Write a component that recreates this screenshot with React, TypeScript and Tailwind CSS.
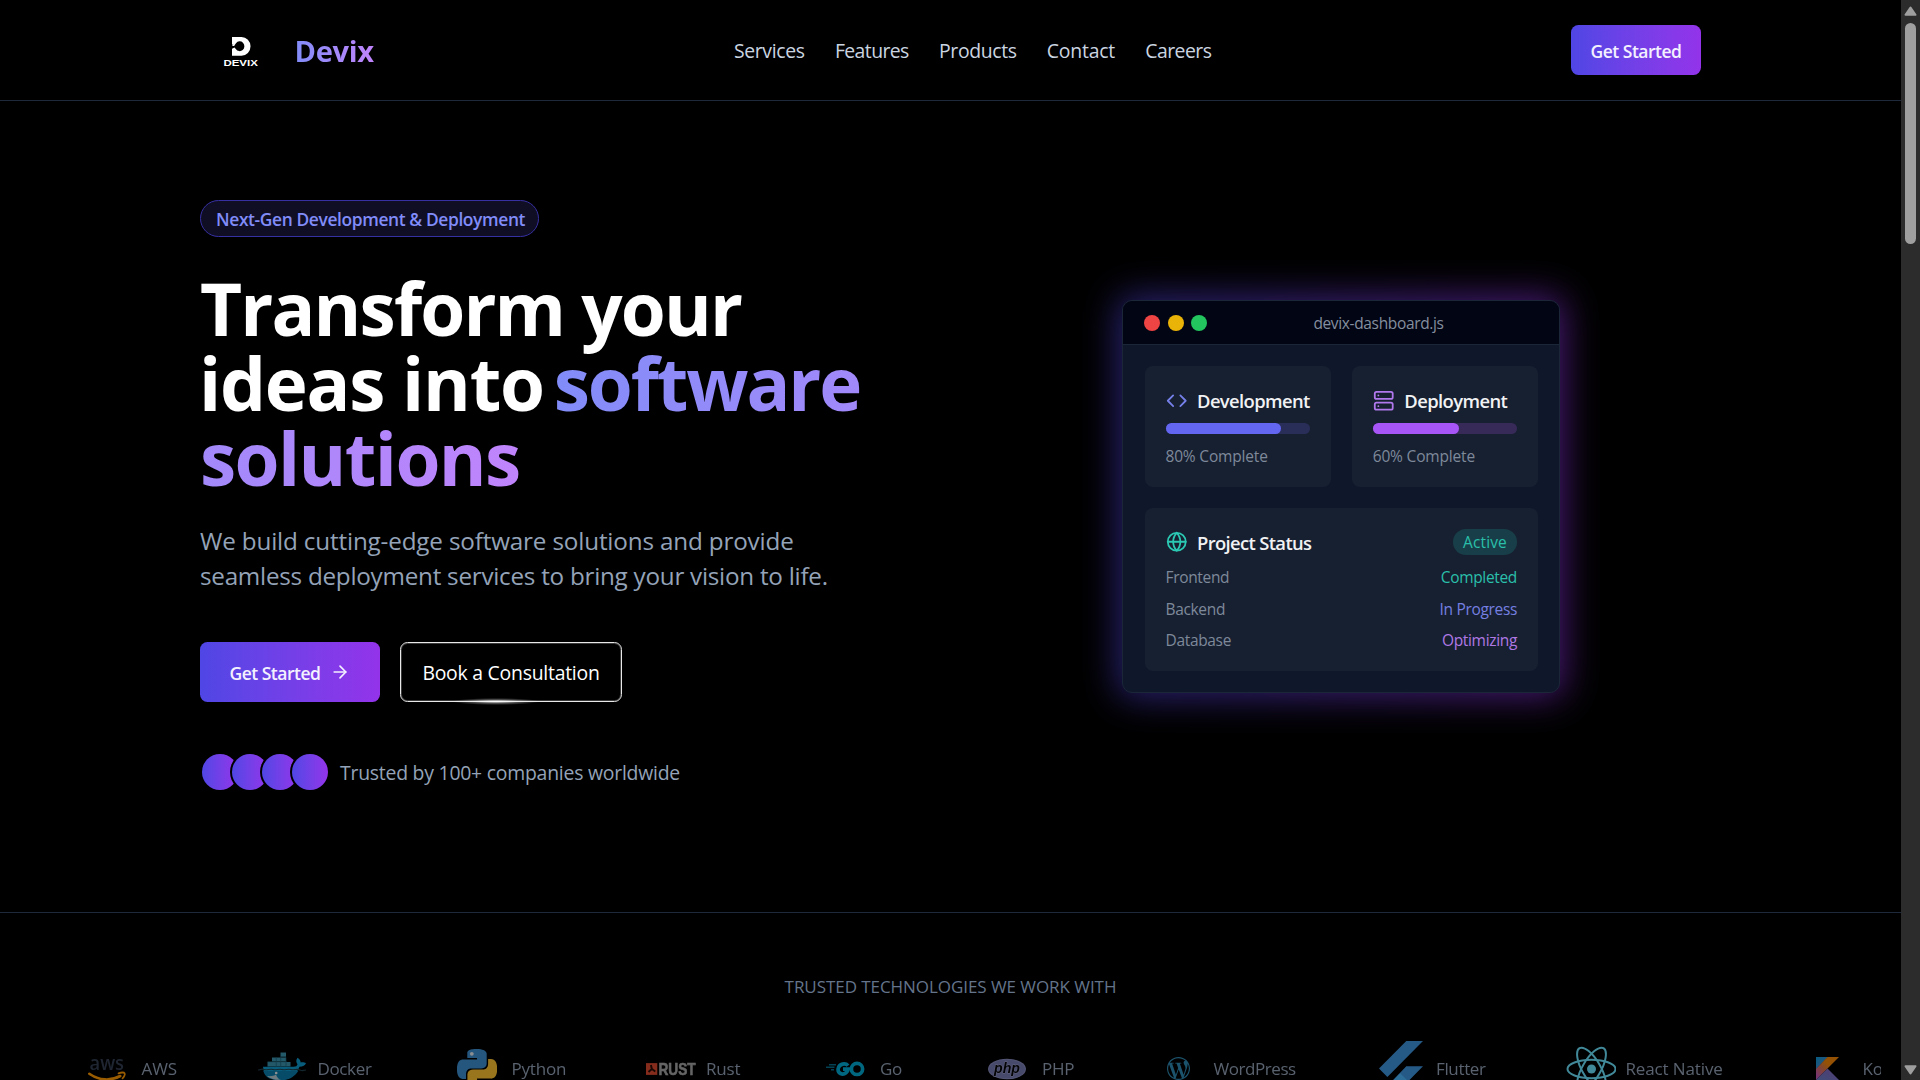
import React from 'react';
import { ArrowRight, Code, Globe, Server } from 'lucide-react';
import { SiWordpress } from 'react-icons/si';

const navItems = [
  { label: 'Services', tracking: 'tracking-[-0.36px]' },
  { label: 'Features', tracking: 'tracking-[-0.58px]' },
  { label: 'Products', tracking: 'tracking-[-0.37px]' },
  { label: 'Contact', tracking: 'tracking-[-0.21px]' },
  { label: 'Careers', tracking: 'tracking-[-0.55px]' },
];

function DevixMark() {
  return (
    <svg width="36" height="32" viewBox="0 0 36 32" fill="#fff">
      <path
        fillRule="evenodd"
        d="M9 1h9.500a9 9.300 0 0 1 0 18.700H9v-7l2.500-1.200 1.300 1.500a4.700 4.900 0 1 0 .2-5.800l-1.500 2L9 8.500z"
      />
      <rect x="9.400" y="9" width="2" height="1" />
      <text
        x="0.400"
        y="29.600"
        fontFamily="Liberation Sans, sans-serif"
        fontWeight="700"
        fontSize="8.400"
        textLength="34.500"
        lengthAdjust="spacingAndGlyphs"
      >
        DEVIX
      </text>
    </svg>
  );
}

function Header() {
  return (
    <header className="h-[101px] border-b border-[#1e293b]">
      <div className="ml-[200px] flex h-[100px] w-[1501px] items-center justify-between">
        <div className="flex w-[300px] items-center pl-[22.5px]">
          <div className="mt-[3px]">
            <DevixMark />
          </div>
          <span className="ml-[36px] bg-gradient-to-r from-[#818cf8] to-[#c084fc] bg-clip-text pt-px text-[29.1px] leading-[40px] font-bold tracking-[-0.35px] text-transparent">
            Devix
          </span>
        </div>
        <nav className="ml-[10px] flex flex-1 gap-[30.3px] pt-px pl-[224px] text-[19.4px] leading-[28px] text-[#cbd5e1]">
          {navItems.map((item) => (
            <a key={item.label} className={item.tracking}>
              {item.label}
            </a>
          ))}
        </nav>
        <button className="flex h-[50px] w-[130px] items-center justify-center rounded-[7.5px] bg-gradient-to-r from-[#4f46e5] to-[#9333ea] pt-[2px] text-[17.5px] font-semibold tracking-[-0.5px] whitespace-nowrap text-[#f3f0ff]">
          Get Started
        </button>
      </div>
    </header>
  );
}

function HeroCopy() {
  return (
    <div className="w-[720px]">
      <div className="flex h-[37px] w-[339px] items-center rounded-full border border-[#3730a3] bg-[#0f0e25] pt-[2px] pl-[15px] text-[17.4px] font-semibold tracking-[-0.38px] whitespace-nowrap text-[#818cf8]">
        Next-Gen Development &amp; Deployment
      </div>
      <h1 className="mt-[32.5px] text-[72.75px] leading-[75px] font-bold whitespace-nowrap text-white">
        <span className="tracking-[-1.84px]">Transform your</span>
        <br />
        <span className="-ml-px tracking-[-1.2px]">ideas into</span>{' '}
        <span className="-ml-[9px] bg-gradient-to-r from-[#818cf8] to-[#c084fc] bg-clip-text text-transparent">
          <span className="tracking-[-2.1px]">software</span>
          <br />
          <span className="tracking-[-1.6px]">solutions</span>
        </span>
      </h1>
      <p className="mt-[28px] text-[24.25px] leading-[35px] whitespace-nowrap text-[#94a3b8]">
        <span className="tracking-[-0.17px]">We build cutting-edge software solutions and provide</span>
        <br />
        <span className="tracking-[-0.26px]">seamless deployment services to bring your vision to life.</span>
      </p>
      <div className="mt-[49.5px] flex gap-5">
        <button className="flex h-[60px] w-[180px] items-center rounded-[7.5px] bg-gradient-to-r from-[#4f46e5] to-[#9333ea] pl-[29.5px] text-[17.5px] font-semibold tracking-[-0.5px] whitespace-nowrap text-[#f3f0ff]">
          <span className="pt-[2px]">Get Started</span>
          <ArrowRight className="ml-[10px]" size={20} strokeWidth={2} />
        </button>
        <button className="relative flex h-[60px] w-[222px] items-center justify-center rounded-[7.5px] border border-[#e8e8e8] text-[19.4px] tracking-[-0.24px] whitespace-nowrap text-white shadow-[inset_0_0_0_1px_#3a3a3a]">
          <span className="pt-[2px]">Book a Consultation</span>
          <span className="absolute bottom-[-4px] left-[51px] h-[7px] w-[88px] bg-[radial-gradient(closest-side,rgba(255,255,255,0.9),rgba(255,255,255,0.3)_55%,transparent)]" />
        </button>
      </div>
      <div className="mt-[50px] flex items-center">
        <div className="flex -space-x-[10px]">
          {[0, 1, 2, 3].map((n) => (
            <div key={n} className="size-10 rounded-full bg-black p-[2px]">
              <div className="size-9 rounded-full bg-gradient-to-r from-[#4f46e5] to-[#9333ea]" />
            </div>
          ))}
        </div>
        <span className="ml-[10px] pt-px text-[19.4px] leading-[28px] tracking-[-0.23px] whitespace-nowrap text-[#94a3b8]">
          Trusted by 100+ companies worldwide
        </span>
      </div>
    </div>
  );
}

const statusRows = [
  { label: 'Frontend', value: 'Completed', color: 'text-[#2abfaa]' },
  { label: 'Backend', value: 'In Progress', color: 'text-[#757fe0]' },
  { label: 'Database', value: 'Optimizing', color: 'text-[#b078e5]' },
];

function DashboardCard() {
  return (
    <div className="relative h-[393px] w-[438px]">
      <div className="absolute -inset-[4px] rounded-[12px] bg-gradient-to-r from-[#4f46e5] to-[#9333ea] opacity-50 blur-[18px]" />
      <div className="relative flex h-[393px] w-[438px] flex-col overflow-hidden rounded-[10px] border border-[#1b2638] bg-[#0f172a]">
        <div className="flex h-[44px] shrink-0 items-center border-b border-[#1b2638] bg-[#020514] pl-[21px]">
          <div className="flex gap-[7.7px]">
            <div className="size-[16px] rounded-full bg-[#ef4444]" />
            <div className="size-[16px] rounded-full bg-[#eab308]" />
            <div className="size-[16px] rounded-full bg-[#22c55e]" />
          </div>
          <span className="ml-[106px] pt-[2px] text-[15.5px] tracking-[-0.35px] text-[#848f9f]">devix-dashboard.js</span>
        </div>
        <div className="flex flex-col gap-[21px] py-[21px] pr-[21px] pl-[21.5px]">
          <div className="grid grid-cols-2 gap-[21px]">
            <div className="h-[121px] rounded-[8px] bg-[#172031] p-[21px]">
              <div className="flex h-[28px] items-center gap-[10px]">
                <Code className="shrink-0 text-[#757fe8]" size={21.5} strokeWidth={2} />
                <span className="text-[18.4px] font-semibold tracking-[-0.6px] text-[#f1f2f4]">Development</span>
              </div>
              <div className="mt-[8px] h-[11px] w-full rounded-full bg-[#282e58]">
                <div className="h-[11px] w-4/5 rounded-full bg-[#6366f1]" />
              </div>
              <div className="mt-[12px] text-[15.5px] leading-[21px] tracking-[-0.18px] text-[#7e899a]">80% Complete</div>
            </div>
            <div className="h-[121px] rounded-[8px] bg-[#172031] p-[21px]">
              <div className="flex h-[28px] items-center gap-[10px]">
                <Server className="shrink-0 text-[#b078ec]" size={21.5} strokeWidth={2} />
                <span className="text-[18.4px] font-semibold tracking-[-0.59px] text-[#f1f2f4]">Deployment</span>
              </div>
              <div className="mt-[8px] h-[11px] w-full rounded-full bg-[#372a59]">
                <div className="h-[11px] w-3/5 rounded-full bg-[#a855f7]" />
              </div>
              <div className="mt-[12px] text-[15.5px] leading-[21px] tracking-[-0.18px] text-[#7e899a]">60% Complete</div>
            </div>
          </div>
          <div className="h-[163px] rounded-[8px] bg-[#172031] p-[21px]">
            <div className="flex h-[26px] items-center justify-between">
              <div className="flex items-center gap-[10px]">
                <Globe className="shrink-0 text-[#2bc9b3]" size={21.5} strokeWidth={2} />
                <span className="pt-px text-[18.4px] font-semibold tracking-[-0.64px] text-[#f1f2f4]">Project Status</span>
              </div>
              <span className="flex h-[26px] w-[64px] items-center justify-center rounded-full bg-[#183f49] pt-[2px] text-[15.5px] tracking-[0.11px] text-[#2abfaa]">
                Active
              </span>
            </div>
            <div className="mt-[12px] flex flex-col gap-[10.6px] text-[15.5px] leading-[21px] tracking-[-0.33px]">
              {statusRows.map((row) => (
                <div key={row.label} className="flex justify-between">
                  <span className="text-[#7e899a]">{row.label}</span>
                  <span className={row.color}>{row.value}</span>
                </div>
              ))}
            </div>
          </div>
        </div>
      </div>
    </div>
  );
}

function AwsLogo() {
  return (
    <svg width="50" height="50" viewBox="0 0 50 50">
      <text x="7.500" y="25.500" fontFamily="Open Sans, sans-serif" fontWeight="600" fontSize="19" textLength="34.500" lengthAdjust="spacingAndGlyphs" fill="#343f52">
        aws
      </text>
      <path d="M7.300 29.800c10 7.200 22 7 31 2.200" fill="none" stroke="#ff9900" strokeWidth="2.600" strokeLinecap="round" />
      <path d="M36.500 29.400c3-1.200 5.700-.9 6.200 0s-.5 3.500-2.200 5" fill="none" stroke="#ff9900" strokeWidth="1.700" strokeLinecap="round" />
    </svg>
  );
}

function DockerLogo() {
  return (
    <svg width="50" height="50" viewBox="0 0 50 50">
      <g fill="#3b94b0">
        <path d="M22.500 8.500h5.500v4.300h-5.500zM14 13.500h14v4h-14zM9.500 18h23v4.600h-23z" />
      </g>
      <path d="M22.500 12.900H28M18.200 13.500v9M22.700 13.500v9M28 13.500v9M9.500 17.700h19" stroke="#1d6276" strokeWidth=".7" />
      <path
        d="M5 22.800h30.500c2.500 0 3.500-.8 4-2.500-1.500-2-1.700-4.300 0-6.500 2 1.200 3 2.600 3.200 4.600 2-.3 4-.1 5.300.9-1 2.300-3 3.400-6.500 3.400C38 31 32 36 21.500 36 12 36 5.500 32 5 22.800z"
        fill="#0f9bcf"
      />
      <path d="M5.300 27h35c-5 7-10 9.300-18.500 9.300C13 36.300 7 33.500 5.300 27z" fill="#0b7fae" />
      <path d="M9 32c4 .5 7-.2 9-1.500 1 3.300 2.500 4.600 5 5.300-5 .3-10-.5-14-3.800z" fill="#b7cdd6" />
      <circle cx="18.200" cy="29" r="1.300" fill="#e8f1f4" />
      <path d="M0 26c3 0 3-1.500 6-.5s6-1 9 0 6-1 9 0 6-1 9 0 6-1 9 .5 3 0 6 0" fill="none" stroke="#20404b" strokeWidth="1.200" />
    </svg>
  );
}

function PythonLogo() {
  return (
    <svg width="40" height="40" viewBox="0 0 24 24">
      <path
        fill="#3f8fd0"
        d="M14.25.18l.9.2.73.26.59.3.45.32.34.34.25.34.16.33.1.3.04.26.02.2-.01.13V8.5l-.05.63-.13.55-.21.46-.26.38-.3.31-.33.25-.35.19-.35.14-.33.1-.3.07-.26.04-.21.02H8.77l-.69.05-.59.14-.5.22-.41.27-.33.32-.27.35-.2.36-.15.37-.1.35-.07.32-.04.27-.02.21v3.06H3.17l-.21-.03-.28-.07-.32-.12-.35-.18-.36-.26-.36-.36-.35-.46-.32-.59-.28-.73-.21-.88-.14-1.05-.05-1.23.06-1.22.16-1.04.24-.87.32-.71.36-.57.4-.44.42-.33.42-.24.4-.16.36-.1.32-.05.24-.01h.16l.06.01h8.16v-.83H6.18l-.01-2.75-.02-.37.05-.34.11-.31.17-.28.25-.26.31-.23.38-.2.44-.18.51-.15.58-.12.64-.1.71-.06.77-.04.84-.02 1.27.05z"
      />
      <circle cx="8.900" cy="2.900" r="1.150" fill="#e8eef3" />
      <path
        fill="#ffc331"
        d="M21.1 6.11l.28.06.32.12.35.18.36.27.36.35.35.47.32.59.28.73.21.88.14 1.04.05 1.23-.06 1.23-.16 1.04-.24.86-.32.71-.36.57-.4.45-.42.33-.42.24-.4.16-.36.09-.32.05-.24.02-.16-.01h-8.22v.82h5.84l.01 2.76.02.36-.05.34-.11.31-.17.29-.25.25-.31.24-.38.2-.44.17-.51.15-.58.13-.64.09-.71.07-.77.04-.84.01-1.27-.04-1.07-.14-.9-.2-.73-.25-.59-.3-.45-.33-.34-.34-.25-.34-.16-.33-.1-.3-.04-.25-.02-.2.01-.13v-5.34l.05-.64.13-.54.21-.46.26-.38.3-.32.33-.24.35-.2.35-.14.33-.1.3-.06.26-.04.21-.02.13-.01h5.84l.69-.05.59-.14.5-.21.41-.28.33-.32.27-.35.2-.36.15-.36.1-.35.07-.32.04-.28.02-.21V6.07h2.09l.14.01z"
      />
    </svg>
  );
}

function RustLogo() {
  return (
    <svg width="51" height="14" viewBox="0 0 51 14">
      <rect x="0" y="1" width="11.500" height="12" fill="#e04a30" />
      <path d="M6 7L5 3M6 7l-3.500 3M6 7l3.500 2.500" stroke="#2a0c08" strokeWidth="2" />
      <text x="12.700" y="13" fontFamily="Liberation Sans, sans-serif" fontWeight="700" fontSize="16.500" textLength="38" lengthAdjust="spacingAndGlyphs" fill="#a8a8a8" stroke="#a8a8a8" strokeWidth=".6">
        RUST
      </text>
    </svg>
  );
}

function GoLogo() {
  return (
    <svg width="40" height="16" viewBox="0 0 40 16">
      <path d="M4 3.800h7M1 6.300h8.500M6 8.800h3" stroke="#046f8c" strokeWidth="1.400" />
      <g fill="none" stroke="#00acd7" strokeWidth="3.700">
        <path d="M23 4.600c-2.500-3-8.800-2-9.800 2.900-.9 5 4.500 7 7.800 4.300 1.300-1 2-2.300 2.200-3.600h-5.200" />
        <ellipse cx="32" cy="7.900" rx="5.600" ry="5.600" />
      </g>
    </svg>
  );
}

function PhpLogo() {
  return (
    <svg width="40" height="22" viewBox="0 0 40 22">
      <ellipse cx="20" cy="11" rx="19" ry="10.300" fill="#8a8dc0" />
      <ellipse cx="20" cy="11" rx="18" ry="9.300" fill="#787cb4" />
      <text x="7" y="14.500" fontFamily="Liberation Sans, sans-serif" fontWeight="700" fontStyle="italic" fontSize="14" textLength="26" lengthAdjust="spacingAndGlyphs" fill="#08080c" stroke="#a5a8d0" strokeWidth=".8" paintOrder="stroke">
        php
      </text>
    </svg>
  );
}

function FlutterLogo() {
  return (
    <svg width="44" height="55" viewBox="0 0 44 55" className="shrink-0">
      <path d="M27.300 0H44L8.400 36 0 27.500z" fill="#3f97e0" />
      <path d="M27.300 25.200H44L29 40.500 44 55H27.300L12.800 40.500z" fill="#3f97e0" />
      <path d="M12.800 40.500l8.300-8.200 8.400 8.200-8.400 8.300z" fill="#4bb8ff" />
    </svg>
  );
}

function ReactLogo() {
  return (
    <svg width="50" height="50" viewBox="0 0 50 50" fill="none" stroke="#6de4ff" strokeWidth="2">
      <ellipse cx="25.500" cy="25" rx="24" ry="9.200" />
      <ellipse cx="25.500" cy="25" rx="24" ry="9.200" transform="rotate(60 25.500 25)" />
      <ellipse cx="25.500" cy="25" rx="24" ry="9.200" transform="rotate(120 25.500 25)" />
      <circle cx="25.500" cy="25" r="4.500" fill="#6de4ff" stroke="none" />
    </svg>
  );
}

function KotlinLogo() {
  return (
    <svg width="23" height="23" viewBox="0 0 23 23">
      <defs>
        <linearGradient id="kt-a" x1="0" y1="1" x2="1" y2="0">
          <stop offset=".1" stopColor="#c757bc" />
          <stop offset=".45" stopColor="#e07a3c" />
          <stop offset=".6" stopColor="#f88909" />
        </linearGradient>
        <linearGradient id="kt-b" x1="0" y1="0" x2="1" y2="1">
          <stop offset="0" stopColor="#0c9bd8" />
          <stop offset="1" stopColor="#5f83cc" />
        </linearGradient>
        <linearGradient id="kt-c" x1="0" y1="1" x2="1" y2="0">
          <stop offset="0" stopColor="#6a80c8" />
          <stop offset="1" stopColor="#8a62c0" />
        </linearGradient>
      </defs>
      <path d="M0 0h12L0 12.500z" fill="url(#kt-b)" />
      <path d="M11.500 0H23L0 23V12z" fill="url(#kt-a)" />
      <path d="M0 23l11.500-11.500L23 23z" fill="url(#kt-c)" />
    </svg>
  );
}

const technologies = [
  { name: 'AWS', logo: <AwsLogo />, width: 'w-[36px]', tracking: 'tracking-[-0.05px]' },
  { name: 'Docker', logo: <DockerLogo />, width: 'w-[54px]', tracking: 'tracking-[-0.36px]' },
  { name: 'Python', logo: <PythonLogo />, width: 'w-[54.5px]', tracking: 'tracking-[-0.21px]' },
  { name: 'Rust', logo: <RustLogo />, width: 'w-[34px]', tracking: 'tracking-[-0.2px]' },
  { name: 'Go', logo: <GoLogo />, width: 'w-[22px]', tracking: 'tracking-[-0.3px]' },
  { name: 'PHP', logo: <PhpLogo />, width: 'w-[31.5px]', tracking: 'tracking-[-0.3px]' },
  { name: 'WordPress', logo: <SiWordpress size={23} color="#2f8bb5" />, width: 'w-[82.5px]', tracking: 'tracking-[-0.44px]' },
  { name: 'Flutter', logo: <FlutterLogo />, width: 'w-[49.5px]', tracking: 'tracking-[-0.35px]' },
  { name: 'React Native', logo: <ReactLogo />, width: 'w-[97px]', tracking: 'tracking-[-0.13px]' },
  { name: 'Kotlin', logo: <KotlinLogo />, width: 'w-[48px]', tracking: 'tracking-[-0.2px]' },
];

function Technologies() {
  return (
    <section className="mt-[120px] border-t border-[#1e293b]">
      <div className="mt-[61px] text-center text-[17px] leading-[25px] tracking-[-0.06px] text-[#64748b]">
        TRUSTED TECHNOLOGIES WE WORK WITH
      </div>
      <div className="mx-[20px] mt-[39.5px] flex h-[60px] gap-[80px] overflow-hidden pl-[61.5px]">
        {technologies.map((tech) => (
          <div key={tech.name} className="flex shrink-0 items-center gap-[10px] opacity-60">
            <div className="flex size-[50px] items-center justify-center">{tech.logo}</div>
            <span className={`${tech.width} ${tech.tracking} text-[17px] leading-[25px] whitespace-nowrap text-[#94a3b8]`}>
              {tech.name}
            </span>
          </div>
        ))}
      </div>
    </section>
  );
}

function Scrollbar() {
  return (
    <aside className="flex h-full w-[19px] shrink-0 flex-col items-center bg-[#2c2c2c]">
      <svg className="mt-[6px]" width="13" height="10" viewBox="0 0 13 10">
        <path d="M6.500 1.500L11.500 8.800h-10z" fill="#9f9f9f" stroke="#9f9f9f" strokeWidth="2" strokeLinejoin="round" />
      </svg>
      <div className="mt-[7px] h-[221px] w-[11px] rounded-full bg-[#9f9f9f]" />
      <svg className="mt-auto mb-[5px]" width="13" height="10" viewBox="0 0 13 10">
        <path d="M6.500 8.500L11.500 1.200h-10z" fill="#9f9f9f" stroke="#9f9f9f" strokeWidth="2" strokeLinejoin="round" />
      </svg>
    </aside>
  );
}

export default function App() {
  return (
    <div className="flex h-[1080px] w-[1920px] overflow-hidden bg-black font-['Open_Sans',sans-serif]">
      <div className="h-full w-[1901px] overflow-hidden">
        <Header />
        <main className="mt-[99px] ml-[200px] flex h-[592px] w-[1501px] justify-between">
          <HeroCopy />
          <div className="flex w-[720px] items-center justify-center pt-px">
            <DashboardCard />
          </div>
        </main>
        <Technologies />
      </div>
      <Scrollbar />
    </div>
  );
}
